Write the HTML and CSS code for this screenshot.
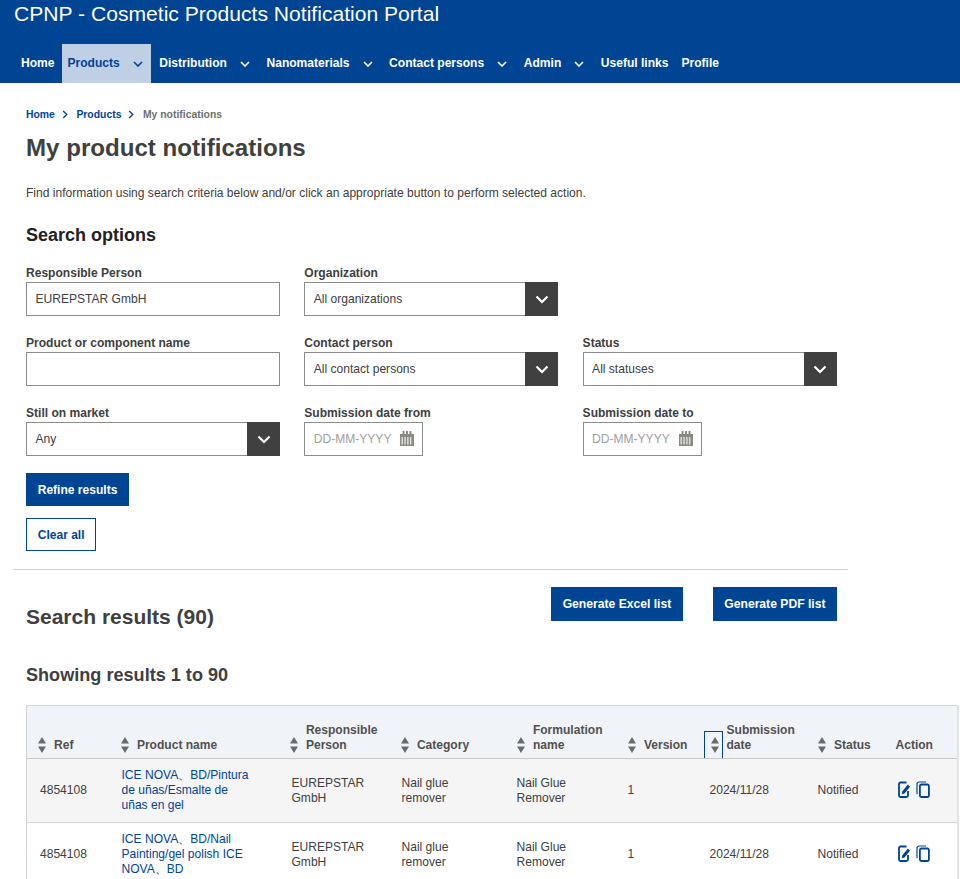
FILE: index.html
```html
<!DOCTYPE html>
<html lang="en">
<head>
    <meta charset="UTF-8">
    <title>CPNP - My product notifications</title>
    <link rel="stylesheet" href="styles.css">
</head>
<body>
    <header class="site-header">
        <div class="site-title">CPNP - Cosmetic Products Notification Portal</div>
        <nav class="main-nav">
            <a class="nav-item nav-home" href="#">Home</a>
            <a class="nav-item nav-active" href="#">Products <svg class="nav-chev" viewBox="0 0 10 6"><path d="M1 1l4 4 4-4"/></svg></a>
            <a class="nav-item" href="#">Distribution <svg class="nav-chev" viewBox="0 0 10 6"><path d="M1 1l4 4 4-4"/></svg></a>
            <a class="nav-item" href="#">Nanomaterials <svg class="nav-chev" viewBox="0 0 10 6"><path d="M1 1l4 4 4-4"/></svg></a>
            <a class="nav-item" href="#">Contact persons <svg class="nav-chev" viewBox="0 0 10 6"><path d="M1 1l4 4 4-4"/></svg></a>
            <a class="nav-item" href="#">Admin <svg class="nav-chev" viewBox="0 0 10 6"><path d="M1 1l4 4 4-4"/></svg></a>
            <a class="nav-item" href="#">Useful links</a>
            <a class="nav-item" href="#">Profile</a>
        </nav>
    </header>

    <main class="content">
        <div class="breadcrumb">
            <a href="#">Home</a>
            <svg class="crumb-sep" viewBox="0 0 6 10"><path d="M1 1l4 4-4 4"/></svg>
            <a href="#">Products</a>
            <svg class="crumb-sep" viewBox="0 0 6 10"><path d="M1 1l4 4-4 4"/></svg>
            <span>My notifications</span>
        </div>
        <h1>My product notifications</h1>
        <p class="intro">Find information using search criteria below and/or click an appropriate button to perform selected action.</p>

        <h2 class="options-title">Search options</h2>
        <form class="search-form">
            <div class="field">
                <label>Responsible Person</label>
                <div class="text-box">EUREPSTAR GmbH</div>
            </div>
            <div class="field">
                <label>Organization</label>
                <div class="select-box"><span>All organizations</span><i class="select-btn"><svg viewBox="0 0 14 9"><path d="M1.5 1.5L7 7l5.5-5.5"/></svg></i></div>
            </div>
            <div class="field"></div>

            <div class="field">
                <label>Product or component name</label>
                <div class="text-box"></div>
            </div>
            <div class="field">
                <label>Contact person</label>
                <div class="select-box"><span>All contact persons</span><i class="select-btn"><svg viewBox="0 0 14 9"><path d="M1.5 1.5L7 7l5.5-5.5"/></svg></i></div>
            </div>
            <div class="field">
                <label>Status</label>
                <div class="select-box"><span>All statuses</span><i class="select-btn"><svg viewBox="0 0 14 9"><path d="M1.5 1.5L7 7l5.5-5.5"/></svg></i></div>
            </div>

            <div class="field">
                <label>Still on market</label>
                <div class="select-box"><span>Any</span><i class="select-btn"><svg viewBox="0 0 14 9"><path d="M1.5 1.5L7 7l5.5-5.5"/></svg></i></div>
            </div>
            <div class="field">
                <label>Submission date from</label>
                <div class="date-box"><span>DD-MM-YYYY</span><svg class="cal-icon"><use href="#cal"/></svg></div>
            </div>
            <div class="field">
                <label>Submission date to</label>
                <div class="date-box"><span>DD-MM-YYYY</span><svg class="cal-icon"><use href="#cal"/></svg></div>
            </div>
        </form>

        <div class="form-actions">
            <a class="btn btn-primary" href="#">Refine results</a>
            <a class="btn btn-outline" href="#">Clear all</a>
        </div>

        <hr class="divider">

        <div class="results-head">
            <h2 class="results-title">Search results (90)</h2>
            <div class="export-btns">
                <a class="btn btn-primary btn-export" href="#">Generate Excel list</a>
                <a class="btn btn-primary btn-export" href="#">Generate PDF list</a>
            </div>
        </div>

        <h3 class="showing">Showing results 1 to 90</h3>

        <table class="results">
            <colgroup>
                <col class="c-ref"><col class="c-name"><col class="c-rp"><col class="c-cat"><col class="c-form"><col class="c-ver"><col class="c-date"><col class="c-status"><col class="c-action">
            </colgroup>
            <thead>
                <tr>
                    <th><div class="th-in th-ref"><svg class="sort"><use href="#sort"/></svg>Ref</div></th>
                    <th><div class="th-in"><svg class="sort"><use href="#sort"/></svg>Product name</div></th>
                    <th><div class="th-in"><svg class="sort"><use href="#sort"/></svg>Responsible<br>Person</div></th>
                    <th><div class="th-in"><svg class="sort"><use href="#sort"/></svg>Category</div></th>
                    <th><div class="th-in"><svg class="sort"><use href="#sort"/></svg>Formulation<br>name</div></th>
                    <th><div class="th-in"><svg class="sort"><use href="#sort"/></svg>Version</div></th>
                    <th><div class="th-in"><span class="sort-focus"><svg class="sort"><use href="#sort"/></svg></span>Submission<br>date</div></th>
                    <th><div class="th-in"><svg class="sort"><use href="#sort"/></svg>Status</div></th>
                    <th>Action</th>
                </tr>
            </thead>
            <tbody>
                <tr class="row-odd">
                    <td>4854108</td>
                    <td class="td-name"><a href="#">ICE NOVA、BD/Pintura de uñas/Esmalte de uñas en gel</a></td>
                    <td>EUREPSTAR GmbH</td>
                    <td>Nail glue remover</td>
                    <td>Nail Glue Remover</td>
                    <td>1</td>
                    <td>2024/11/28</td>
                    <td>Notified</td>
                    <td><div class="actions"><svg class="act-edit"><use href="#edit"/></svg><svg class="act-copy"><use href="#copy"/></svg></div></td>
                </tr>
                <tr>
                    <td>4854108</td>
                    <td class="td-name"><a href="#">ICE NOVA、BD/Nail Painting/gel polish ICE NOVA、BD</a></td>
                    <td>EUREPSTAR GmbH</td>
                    <td>Nail glue remover</td>
                    <td>Nail Glue Remover</td>
                    <td>1</td>
                    <td>2024/11/28</td>
                    <td>Notified</td>
                    <td><div class="actions"><svg class="act-edit"><use href="#edit"/></svg><svg class="act-copy"><use href="#copy"/></svg></div></td>
                </tr>
            </tbody>
        </table>
    </main>

    <!-- shared icons -->
    <svg class="sprites" width="0" height="0">
        <symbol id="sort" viewBox="0 0 8 16">
            <path d="M4 0l4 6.5H0z M0 9.5h8L4 16z" fill="#6b6b6b"/>
        </symbol>
        <symbol id="cal" viewBox="0 0 14 15">
            <path d="M0 3h14v12H0z" fill="#8a8a84"/>
            <path d="M2.500 0h2v4h-2z M6 0h2v4H6z M9.500 0h2v4h-2z" fill="#8a8a84"/>
            <path d="M1.500 6h1.500v7.500H1.500z M4.300 6h1.500v7.500H4.300z M7.100 6h1.500v7.500H7.100z M9.900 6h1.500v7.500H9.900z" fill="#dcdcd8"/>
        </symbol>
        <symbol id="edit" viewBox="0 0 12 17">
            <path d="M8.500 1.500L2.500 1.500A1.500 1.500 0 0 0 1 3v11.500A1.500 1.500 0 0 0 2.500 16h6A1.500 1.500 0 0 0 10 14.500V10" fill="none" stroke="#004494" stroke-width="1.8"/>
            <path d="M9.800 3.500L12 5.700 6.500 12.500 3.800 13.200 4.200 10.400z" fill="#004494"/>
        </symbol>
        <symbol id="copy" viewBox="0 0 14 17">
            <path d="M1 13V3a2 2 0 0 1 2-2h7" fill="none" stroke="#004494" stroke-width="1.2"/>
            <path d="M3.900 5a1.500 1.500 0 0 1 1.500-1.500h6A1.500 1.500 0 0 1 12.900 5v9.500a1.500 1.500 0 0 1-1.500 1.500h-6a1.500 1.500 0 0 1-1.500-1.500z" fill="none" stroke="#004494" stroke-width="1.8"/>
        </symbol>
    </svg>
</body>
</html>
```

FILE: styles.css
```css
html, body {
    height: 879px;
    overflow: hidden;
}

body {
    margin: 0;
    background-color: #fff;
    color: #404040;
    font-family: "Liberation Sans", Arial, sans-serif;
    font-size: 12.06px;
}

a {
    text-decoration: none;
}

/* header */
.site-header {
    height: 83px;
    background-color: #004494;
    color: #fff;
    display: flex;
    flex-direction: column;
    justify-content: space-between;
}

.site-title {
    padding: 2px 0 0 14px;
    font-size: 21.1px;
    line-height: 23px;
}

.main-nav {
    display: flex;
    height: 39px;
    padding-left: 16px;
}

.nav-item {
    display: flex;
    align-items: center;
    gap: 13px;
    padding: 0 5px 2px;
    margin-right: 3px;
    color: #fff;
    font-weight: bold;
}

.nav-active {
    background-color: #bfcfe4;
    color: #004494;
}

.nav-chev {
    width: 10px;
    height: 6px;
    margin: 3px 3.6px 0 0;
    fill: none;
    stroke: currentColor;
    stroke-width: 1.6;
}

/* page body */
.content {
    padding-left: 26px;
}

.breadcrumb {
    display: flex;
    align-items: center;
    gap: 7px;
    margin-top: 24px;
    height: 14px;
    font-size: 10.4px;
    font-weight: bold;
    color: #707070;
}

.breadcrumb a {
    color: #004494;
}

.crumb-sep {
    width: 6px;
    height: 9px;
    margin-right: 1.5px;
    fill: none;
    stroke: #004494;
    stroke-width: 1.5;
}

h1 {
    margin: 12px 0 0;
    font-size: 24.1px;
    line-height: 30px;
}

.intro {
    margin: 23px 0 0;
    line-height: 14px;
}

.options-title {
    margin: 24px 0 0;
    font-size: 18px;
    line-height: 22px;
    color: #222;
}

/* search form */
.search-form {
    display: grid;
    grid-template-columns: repeat(3, 254px);
    column-gap: 24.3px;
    row-gap: 20px;
    margin-top: 20px;
}

.field label {
    display: block;
    font-weight: bold;
    line-height: 14px;
    margin-bottom: 2px;
}

.text-box,
.select-box,
.date-box {
    box-sizing: border-box;
    height: 34px;
    border: 1px solid #8c8c8c;
    display: flex;
    align-items: center;
    padding: 0 0 1px 8.5px;
}

.select-box {
    justify-content: space-between;
}

.select-btn {
    width: 33px;
    height: 34px;
    margin: -1px -1px -2px 0;
    background-color: #404040;
    display: flex;
    align-items: center;
    justify-content: center;
}

.select-btn svg {
    width: 14px;
    height: 9px;
    fill: none;
    stroke: #fff;
    stroke-width: 2.2;
}

.date-box {
    width: 119px;
    color: #a0a0a0;
    justify-content: space-between;
    padding-right: 8px;
}

.cal-icon {
    width: 14px;
    height: 15px;
}

/* buttons */
.form-actions {
    display: flex;
    flex-direction: column;
    align-items: flex-start;
    gap: 12px;
    margin-top: 17px;
}

.btn {
    box-sizing: border-box;
    display: flex;
    align-items: center;
    justify-content: center;
    height: 33px;
    padding: 0 11.7px;
    font-weight: bold;
}

.btn-primary {
    background-color: #004494;
    color: #fff;
}

.btn-export {
    height: 34px;
    font-size: 12.15px;
    padding: 0 11.5px;
}

.btn-outline {
    border: 1px solid #004494;
    color: #004494;
    padding: 0 10.7px;
}

.divider {
    margin: 18px 0 0 -13px;
    width: 835px;
    height: 1px;
    border: 0;
    background-color: #c3d4e6;
}

.results-head {
    display: flex;
    justify-content: space-between;
    width: 811px;
    margin-top: 17px;
}

.results-title {
    margin: 18px 0 0;
    font-size: 21px;
    line-height: 24px;
}

.export-btns {
    display: flex;
    gap: 30px;
}

.showing {
    margin: 34px 0 0;
    font-size: 18.1px;
    line-height: 24px;
}

/* results table */
.results {
    table-layout: fixed;
    border-collapse: collapse;
    width: 931px;
    margin-top: 18px;
    border: 1px solid #d4d4d4;
    border-right: 2px solid #e4e4e4;
}

.c-ref { width: 82px; }
.c-name { width: 170px; }
.c-rp { width: 110px; }
.c-cat { width: 115px; }
.c-form { width: 111px; }
.c-ver { width: 82px; }
.c-date { width: 108px; }
.c-status { width: 79px; }
.c-action { width: 74px; }

.results th {
    height: 47px;
    padding: 0 0 5px 12px;
    background-color: #f0f4f9;
    border-bottom: 1px solid #c8c8c8;
    text-align: left;
    vertical-align: bottom;
    line-height: 15px;
    color: #505050;
}

.results th:nth-child(1),
.results th:nth-child(3) {
    padding-left: 11px;
}

.results th:nth-child(5),
.results th:nth-child(6),
.results th:nth-child(8) {
    padding-left: 13px;
}

.results th:nth-child(7) {
    padding-left: 14px;
}

.th-in {
    display: flex;
    align-items: flex-end;
    gap: 8.4px;
}

.th-ref {
    gap: 8px;
}

.sort {
    flex: none;
    width: 8px;
    height: 16px;
}

.sort-focus {
    display: flex;
    align-items: center;
    margin: 0 -4.4px -5px -7px;
    padding: 5px 3px 5px 6px;
    border: 1px solid #004494;
    border-bottom: 0;
}

.results td {
    height: 63px;
    padding: 0 13px;
    border-bottom: 1px solid #d4d4d4;
    line-height: 15px;
}

.results .td-name {
    padding-right: 28px;
}

.results td a {
    color: #004494;
}

.row-odd td {
    background-color: #f5f5f5;
}

.actions {
    display: flex;
    gap: 6px;
    margin: -2px 0 0 1px;
}

.act-edit {
    width: 12px;
    height: 17px;
}

.act-copy {
    width: 14px;
    height: 17px;
}

.sprites {
    position: absolute;
}
```
